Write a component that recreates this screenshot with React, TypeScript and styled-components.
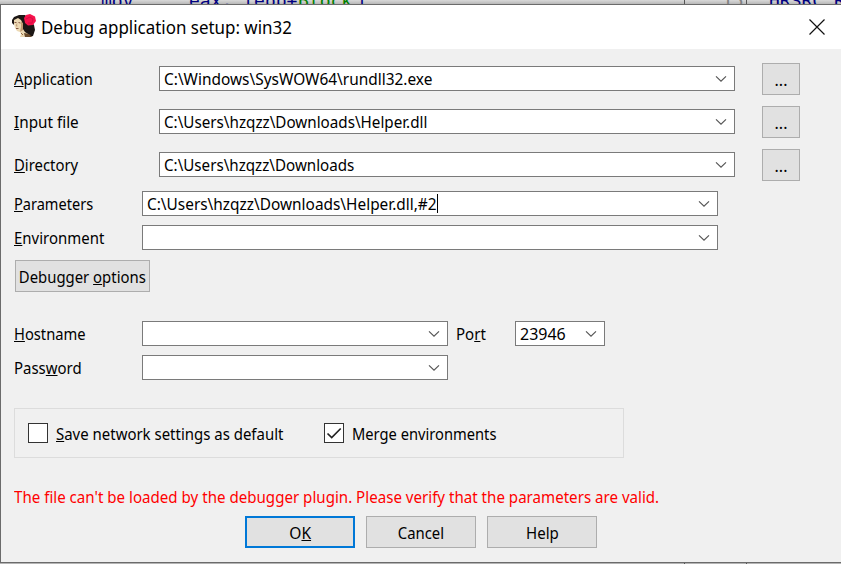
import React from "react";
import styled, { createGlobalStyle } from "styled-components";

const GlobalStyle = createGlobalStyle`
  *, *::before, *::after { box-sizing: border-box; }
  html, body, #root { margin: 0; height: 100%; }
  body {
    overflow: hidden;
    font-family: "Noto Sans", sans-serif;
    font-size: 16px;
    line-height: 22px;
    color: #000;
  }
`;

const Screen = styled.div`
  display: flex;
  flex-direction: column;
  width: 841px;
  height: 564px;
  overflow: hidden;
  background: #a9a9a9;
`;

const CodeStrip = styled.div`
  display: flex;
  flex: none;
  height: 4px;
  overflow: hidden;
  background: linear-gradient(#d9d9d9, #b8b8b8);
  font: 18px/17px "DejaVu Sans Mono", monospace;
  color: #000080;
  white-space: pre;
`;

const CodeText = styled.span<{ $x: number; $color?: string }>`
  width: 0;
  margin-left: ${(p) => p.$x}px;
  height: 17px;
  margin-top: -8px;
  color: ${(p) => p.$color ?? "#000080"};
`;

const Gutter = styled.div<{ $left: number }>`
  flex: none;
  width: 1px;
  height: 4px;
  margin-left: ${(p) => p.$left}px;
  background: #555;
`;

const Dialog = styled.section`
  display: flex;
  flex-direction: column;
  flex: none;
  height: 559px;
  border: solid #6b6b6b;
  border-width: 1px 0 1px 1px;
  background: #f0f0f0;
`;

const BottomStrip = styled.div`
  display: flex;
  flex: none;
  height: 1px;
  background: #b4b4b4;
`;

const TitleBar = styled.header`
  display: flex;
  align-items: center;
  flex: none;
  height: 44px;
  padding: 0 16px 0 10px;
  background: #fff;
`;

const Title = styled.h1`
  flex: 1;
  margin: 0 0 0 4px;
  font-size: 18px;
  font-weight: 400;
  line-height: 24px;
`;

const CloseButton = styled.button`
  display: flex;
  margin-top: -1px;
  padding: 0;
  border: 0;
  background: none;
`;

const Squeeze = styled.span<{ $sx: number; $center?: boolean }>`
  display: inline-block;
  white-space: pre;
  transform: scaleX(${(p) => p.$sx});
  transform-origin: ${(p) => (p.$center ? "center" : "left")};
`;

const Key = styled.span`
  text-decoration: underline;
  text-decoration-thickness: 1px;
  text-underline-offset: 1px;
  text-decoration-skip-ink: none;
`;

const Content = styled.div`
  display: flex;
  flex-direction: column;
  padding-left: 13px;
`;

const FileRows = styled.div`
  display: grid;
  grid-template-columns: 145px 576px 38px;
  grid-auto-rows: 32px;
  row-gap: 11px;
  margin-top: 14px;
`;

const Label = styled.label`
  padding-top: 2px;
`;

const FileLabel = styled(Label)`
  padding-top: 5px;
`;

const Combo = styled.div<{ $width: number }>`
  display: flex;
  align-items: center;
  width: ${(p) => p.$width}px;
  height: 25px;
  padding: 0 7px 0 4px;
  border: 1px solid #7a7a7a;
  background: #fff;
`;

const FileCombo = styled(Combo)`
  margin-top: 3px;
`;

const Value = styled.div`
  display: flex;
  flex: 1;
  align-items: center;
  padding-top: 1px;
`;

const Caret = styled.i`
  width: 1px;
  height: 19px;
  margin: -2px 0 0 -11px;
  background: #000;
`;

const PushButton = styled.button<{ $primary?: boolean }>`
  display: flex;
  align-items: center;
  justify-content: center;
  width: 110px;
  height: 32px;
  padding: 2px 0 0;
  border: ${(p) => (p.$primary ? "2px solid #0078d7" : "1px solid #adadad")};
  background: #e1e1e1;
  color: #000;
  font: inherit;
`;

const BrowseButton = styled(PushButton)`
  width: 38px;
  margin-left: 27px;
  padding: 2px 0 0;
`;

const OptionsButton = styled(PushButton)`
  width: 135px;
  margin: 10px 0 0 1px;
`;

const FieldRows = styled.div<{ $top: number }>`
  display: flex;
  flex-direction: column;
  gap: 9px;
  margin-top: ${(p) => p.$top}px;
`;

const FieldRow = styled.div`
  display: grid;
  grid-template-columns: 128px auto 67px auto;
  justify-content: start;
  height: 25px;
`;

const PortLabel = styled(Label)`
  padding-left: 8px;
`;

const Group = styled.div`
  display: flex;
  align-items: center;
  width: 610px;
  height: 50px;
  margin: 28px 0 0;
  padding: 0 0 0 13px;
  border: 1px solid #dcdcdc;
`;

const CheckLabel = styled.label<{ $width: number }>`
  display: flex;
  align-items: center;
  gap: 8px;
  width: ${(p) => p.$width}px;
  white-space: nowrap;
`;

const Box = styled.span`
  display: flex;
  flex: none;
  width: 20px;
  height: 20px;
  border: 1px solid #333;
  background: #fff;
`;

const CheckText = styled.span`
  padding-top: 2px;
`;

const ErrorText = styled.p`
  margin: 28px 0 0;
  color: #ff0000;
  white-space: nowrap;
`;

const Actions = styled.footer`
  display: flex;
  gap: 11px;
  margin: 8px 0 0 231px;
`;

const Chevron = () => (
  <svg width="12" height="8" viewBox="0 0 12 8" fill="none">
    <path d="M1 1.3 6 6.2 11 1.3" stroke="#555" strokeWidth="1.15" />
  </svg>
);

const Portrait = () => (
  <svg width="26" height="26" viewBox="0 0 26 26">
    <path d="M1 6 3 3 8 1 14 1 19 6 23 11 24 16 22 22 18 23 12 20 10 13 7 5 3 7 3 11 1 9Z" fill="#1c1715" />
    <path d="M3 6 7 4 10 6 12 10 12 15 14 18 17 20 19 23 9 23 10 20 9 18 6 17 4 14 3 10Z" fill="#ecd9b4" />
    <path d="M10 7 12 10 12 16 9 18 10 13Z" fill="#c19b70" />
    <path d="M3.5 8.5H5.5M7.5 8.5 9.5 9M5 14.5H7.5" stroke="#7a4a38" strokeWidth=".9" fill="none" />
    <path d="M6 9.5 5.2 12H6.5" stroke="#b98e68" strokeWidth=".7" fill="none" />
    <path d="M13 19 18 20 21 23H14Z" fill="#6a4a2b" />
    <path d="M10 19 12 21" stroke="#8f6843" fill="none" />
    <path d="M13 4 15 1 19 0 24 2.5 25 7 22 11 17 11.5 14 9Z" fill="#f7134d" />
    <path d="M15 5 19 3 22 5M22 5 21 9 17 9" stroke="#d50c43" fill="none" />
  </svg>
);

type Field = { k: string; rest: string; sx: number; value: string; vx: number };

const files: Field[] = [
  { k: "A", rest: "pplication", sx: 0.935, value: "C:\\Windows\\SysWOW64\\rundll32.exe", vx: 0.964 },
  { k: "I", rest: "nput file", sx: 0.955, value: "C:\\Users\\hzqzz\\Downloads\\Helper.dll", vx: 0.95 },
  { k: "D", rest: "irectory", sx: 0.93, value: "C:\\Users\\hzqzz\\Downloads", vx: 0.947 },
];

export default function App() {
  return (
    <Screen>
      <GlobalStyle />
      <CodeStrip>
        <CodeText $x={101}>mov</CodeText>
        <CodeText $x={88}>eax, [ebp+</CodeText>
        <CodeText $x={109} $color="#008000">Block</CodeText>
        <CodeText $x={58}>]</CodeText>
        <Gutter $left={328} />
        <CodeText $x={37} $color="#808080">15</CodeText>
        <Gutter $left={24} />
        <CodeText $x={22}>HRSRC</CodeText>
        <CodeText $x={65}>R</CodeText>
      </CodeStrip>
      <Dialog>
        <TitleBar>
          <Portrait />
          <Title><Squeeze $sx={0.94}>Debug application setup: win32</Squeeze></Title>
          <CloseButton aria-label="Close">
            <svg width="16" height="16" viewBox="0 0 16 16">
              <path d="M.5.5 15.5 15.5M15.5.5.5 15.5" stroke="#111" strokeWidth="1.2" />
            </svg>
          </CloseButton>
        </TitleBar>
        <Content>
          <FileRows>
            {files.map((f) => (
              <React.Fragment key={f.k}>
                <FileLabel><Squeeze $sx={f.sx}><Key>{f.k}</Key>{f.rest}</Squeeze></FileLabel>
                <FileCombo $width={576}>
                  <Value><Squeeze $sx={f.vx}>{f.value}</Squeeze></Value>
                  <Chevron />
                </FileCombo>
                <BrowseButton>...</BrowseButton>
              </React.Fragment>
            ))}
          </FileRows>
          <FieldRows $top={10}>
            <FieldRow>
              <Label><Squeeze $sx={0.91}><Key>P</Key>arameters</Squeeze></Label>
              <Combo $width={576}>
                <Value>
                  <Squeeze $sx={0.962}>{"C:\\Users\\hzqzz\\Downloads\\Helper.dll,#2"}</Squeeze>
                  <Caret />
                </Value>
                <Chevron />
              </Combo>
            </FieldRow>
            <FieldRow>
              <Label><Squeeze $sx={0.935}><Key>E</Key>nvironment</Squeeze></Label>
              <Combo $width={576}><Value /><Chevron /></Combo>
            </FieldRow>
          </FieldRows>
          <OptionsButton>
            <Squeeze $sx={0.93} $center>Debugger <Key>o</Key>ptions</Squeeze>
          </OptionsButton>
          <FieldRows $top={29}>
            <FieldRow>
              <Label><Squeeze $sx={0.92}><Key>H</Key>ostname</Squeeze></Label>
              <Combo $width={306}><Value /><Chevron /></Combo>
              <PortLabel><Squeeze $sx={0.94}>Po<Key>r</Key>t</Squeeze></PortLabel>
              <Combo $width={90}><Value>23946</Value><Chevron /></Combo>
            </FieldRow>
            <FieldRow>
              <Label><Squeeze $sx={0.935}>Pass<Key>w</Key>ord</Squeeze></Label>
              <Combo $width={306}><Value /><Chevron /></Combo>
            </FieldRow>
          </FieldRows>
          <Group>
            <CheckLabel $width={296}>
              <Box />
              <CheckText><Squeeze $sx={0.935}><Key>S</Key>ave network settings as default</Squeeze></CheckText>
            </CheckLabel>
            <CheckLabel $width={200}>
              <Box>
                <svg width="18" height="18" viewBox="0 0 18 18" fill="none">
                  <path d="M2.5 9.5 6.7 13.5 15.7 4.5" stroke="#222" strokeWidth="1.7" />
                </svg>
              </Box>
              <CheckText><Squeeze $sx={0.918}>Merge environments</Squeeze></CheckText>
            </CheckLabel>
          </Group>
          <ErrorText>
            <Squeeze $sx={0.944}>The file can't be loaded by the debugger plugin. Please verify that the parameters are valid.</Squeeze>
          </ErrorText>
          <Actions>
            <PushButton $primary><Squeeze $sx={0.97} $center>O<Key>K</Key></Squeeze></PushButton>
            <PushButton><Squeeze $sx={0.93} $center>Cancel</Squeeze></PushButton>
            <PushButton><Squeeze $sx={0.94} $center>Help</Squeeze></PushButton>
          </Actions>
        </Content>
      </Dialog>
      <BottomStrip>
        <Gutter $left={684} />
        <Gutter $left={61} />
      </BottomStrip>
    </Screen>
  );
}
